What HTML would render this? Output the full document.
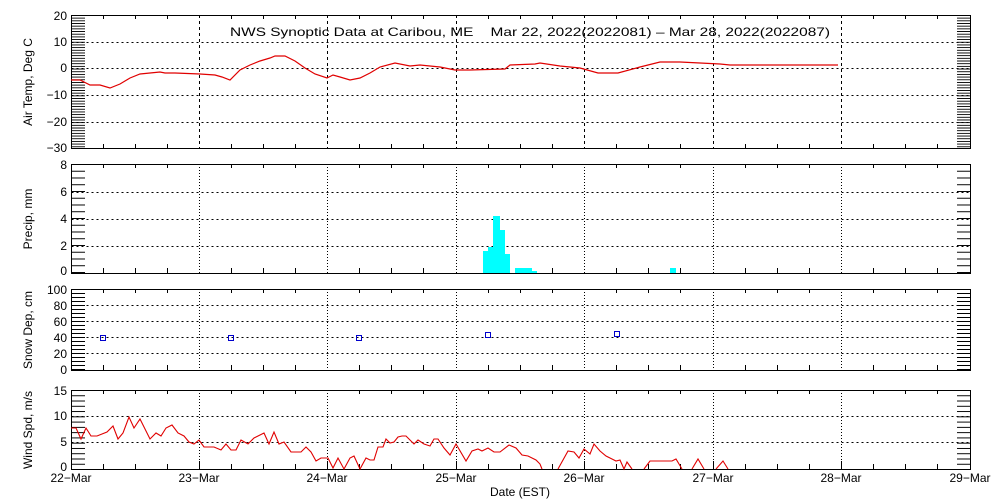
<!DOCTYPE html>
<html><head><meta charset="utf-8"><style>
html,body{margin:0;padding:0;background:#fff}
svg{display:block}
text{font-family:"Liberation Sans",sans-serif;font-size:12px;fill:#000}
</style></head><body>
<svg width="1000" height="500" viewBox="0 0 1000 500" xmlns="http://www.w3.org/2000/svg" shape-rendering="crispEdges">
<defs>
<pattern id="p1" patternUnits="userSpaceOnUse" x="0" y="15" width="20" height="2.68"><rect x="0" y="0" width="20" height="1" fill="#000"/></pattern>
<pattern id="p2" patternUnits="userSpaceOnUse" x="0" y="164" width="20" height="6.75"><rect x="0" y="0" width="20" height="1" fill="#000"/></pattern>
<pattern id="p3" patternUnits="userSpaceOnUse" x="0" y="289" width="20" height="4"><rect x="0" y="0" width="20" height="1" fill="#000"/></pattern>
<pattern id="p4" patternUnits="userSpaceOnUse" x="0" y="390" width="20" height="5.27"><rect x="0" y="0" width="20" height="1" fill="#000"/></pattern>
</defs>
<g fill="none" stroke="#000" stroke-width="1">
<g stroke-dasharray="2,3">
<path d="M71.5 42.5H970M71.5 68.5H970M71.5 95.5H970M71.5 122.5H970"/>
<path d="M71.5 192.5H970M71.5 219.5H970M71.5 246.5H970"/>
<path d="M71.5 305.5H970M71.5 321.5H970M71.5 337.5H970M71.5 353.5H970"/>
<path d="M71.5 416.5H970M71.5 442.5H970"/>
</g>
<g stroke-dasharray="3,3">
<path d="M199.5 15V149M327.5 15V149M456.5 15V149M584.5 15V149M713.5 15V149M841.5 15V149"/>
</g>
<g stroke-dasharray="1,2">
<path d="M199.5 164V273M327.5 164V273M456.5 164V273M584.5 164V273M713.5 164V273M841.5 164V273"/>
<path d="M199.5 289V370M327.5 289V370M456.5 289V370M584.5 289V370M713.5 289V370M841.5 289V370"/>
<path d="M199.5 390V469M327.5 390V469M456.5 390V469M584.5 390V469M713.5 390V469M841.5 390V469"/>
</g>
<rect x="71.5" y="15.5" width="899" height="133"/>
<rect x="71.5" y="164.5" width="899" height="109"/>
<rect x="71.5" y="289.5" width="899" height="81"/>
<rect x="71.5" y="390.5" width="899" height="79"/>
<path d="M103.5 149v-5M135.5 149v-5M167.5 149v-5M231.5 149v-5M263.5 149v-5M295.5 149v-5M359.5 149v-5M391.5 149v-5M423.5 149v-5M488.5 149v-5M520.5 149v-5M552.5 149v-5M616.5 149v-5M648.5 149v-5M680.5 149v-5M745.5 149v-5M777.5 149v-5M809.5 149v-5M873.5 149v-5M905.5 149v-5M937.5 149v-5"/>
<path d="M103.5 15v4M135.5 15v4M167.5 15v4M231.5 15v4M263.5 15v4M295.5 15v4M359.5 15v4M391.5 15v4M423.5 15v4M488.5 15v4M520.5 15v4M552.5 15v4M616.5 15v4M648.5 15v4M680.5 15v4M745.5 15v4M777.5 15v4M809.5 15v4M873.5 15v4M905.5 15v4M937.5 15v4"/>
<path d="M103.5 273v-5M135.5 273v-5M167.5 273v-5M231.5 273v-5M263.5 273v-5M295.5 273v-5M359.5 273v-5M391.5 273v-5M423.5 273v-5M488.5 273v-5M520.5 273v-5M552.5 273v-5M616.5 273v-5M648.5 273v-5M680.5 273v-5M745.5 273v-5M777.5 273v-5M809.5 273v-5M873.5 273v-5M905.5 273v-5M937.5 273v-5"/>
<path d="M103.5 164v4M135.5 164v4M167.5 164v4M231.5 164v4M263.5 164v4M295.5 164v4M359.5 164v4M391.5 164v4M423.5 164v4M488.5 164v4M520.5 164v4M552.5 164v4M616.5 164v4M648.5 164v4M680.5 164v4M745.5 164v4M777.5 164v4M809.5 164v4M873.5 164v4M905.5 164v4M937.5 164v4"/>
<path d="M103.5 370v-5M135.5 370v-5M167.5 370v-5M231.5 370v-5M263.5 370v-5M295.5 370v-5M359.5 370v-5M391.5 370v-5M423.5 370v-5M488.5 370v-5M520.5 370v-5M552.5 370v-5M616.5 370v-5M648.5 370v-5M680.5 370v-5M745.5 370v-5M777.5 370v-5M809.5 370v-5M873.5 370v-5M905.5 370v-5M937.5 370v-5"/>
<path d="M103.5 289v4M135.5 289v4M167.5 289v4M231.5 289v4M263.5 289v4M295.5 289v4M359.5 289v4M391.5 289v4M423.5 289v4M488.5 289v4M520.5 289v4M552.5 289v4M616.5 289v4M648.5 289v4M680.5 289v4M745.5 289v4M777.5 289v4M809.5 289v4M873.5 289v4M905.5 289v4M937.5 289v4"/>
<path d="M103.5 469v-5M135.5 469v-5M167.5 469v-5M231.5 469v-5M263.5 469v-5M295.5 469v-5M359.5 469v-5M391.5 469v-5M423.5 469v-5M488.5 469v-5M520.5 469v-5M552.5 469v-5M616.5 469v-5M648.5 469v-5M680.5 469v-5M745.5 469v-5M777.5 469v-5M809.5 469v-5M873.5 469v-5M905.5 469v-5M937.5 469v-5"/>
<path d="M103.5 390v4M135.5 390v4M167.5 390v4M231.5 390v4M263.5 390v4M295.5 390v4M359.5 390v4M391.5 390v4M423.5 390v4M488.5 390v4M520.5 390v4M552.5 390v4M616.5 390v4M648.5 390v4M680.5 390v4M745.5 390v4M777.5 390v4M809.5 390v4M873.5 390v4M905.5 390v4M937.5 390v4"/>
<path d="M199.5 469v-8M327.5 469v-8M456.5 469v-8M584.5 469v-8M713.5 469v-8M841.5 469v-8"/>
</g>
<rect x="72" y="15" width="13" height="134" fill="url(#p1)"/>
<rect x="957" y="15" width="13" height="134" fill="url(#p1)"/>
<rect x="72" y="164" width="13" height="109" fill="url(#p2)"/>
<rect x="957" y="164" width="13" height="109" fill="url(#p2)"/>
<rect x="72" y="289" width="13" height="81" fill="url(#p3)"/>
<rect x="957" y="289" width="13" height="81" fill="url(#p3)"/>
<rect x="72" y="390" width="13" height="79" fill="url(#p4)"/>
<rect x="957" y="390" width="13" height="79" fill="url(#p4)"/>
<polyline shape-rendering="auto" fill="none" stroke="#e00000" stroke-width="1.2" points="71,80 80,80 90,85 100,85 110,88 120,84 130,78 140,74 150,73 160,72 165,73 175,73 200,74 215,75 222,77 230,80 240,70 250,65 260,61 270,58 275,56 285,56 295,61 305,68 315,74 327,78 333,75 340,77 350,80 360,78 370,73 380,67 395,63 410,66 420,65 440,67 455,70 470,70 505,69 510,65 535,64 540,63 560,66 580,68 598,73 618,73 640,67 660,62 680,62 700,63 720,64 730,65 838,65"/>
<g fill="#00ffff">
<rect x="483" y="251" width="5" height="22"/>
<rect x="488" y="247" width="5" height="26"/>
<rect x="493" y="216" width="7" height="57"/>
<rect x="500" y="230" width="5" height="43"/>
<rect x="505" y="254" width="5" height="19"/>
<rect x="515" y="268" width="17" height="5"/>
<rect x="532" y="271" width="5" height="2"/>
<rect x="670" y="268" width="6" height="5"/>
</g>
<g fill="none" stroke="#0000cc" stroke-width="1">
<rect x="100.5" y="335.5" width="5" height="5"/>
<rect x="228.5" y="335.5" width="5" height="5"/>
<rect x="356.5" y="335.5" width="5" height="5"/>
<rect x="485.5" y="332.5" width="5" height="5"/>
<rect x="614.5" y="331.5" width="5" height="5"/>
</g>
<polyline shape-rendering="auto" fill="none" stroke="#e00000" stroke-width="1.1" points="71,428 76,428 81,439 86,428 91,436 97,436 107,432 113,426 118,439 123,433 129,417 134,428 140,419 150,439 156,433 161,436 166,428 172,425 178,433 184,436 189,442 194,444 199,440 204,447 214,447 221,450 226,444 231,450 236,450 241,440 248,444 254,438 264,433 269,444 274,432 279,444 284,442 291,452 301,452 306,447 311,452 316,461 321,458 328,458 333,468 338,458 344,469 350,458 354,456 360,469 366,458 370,460 374,460 378,447 383,447 386,439 390,443 394,442 398,437 402,436 406,436 414,444 418,440 424,444 430,446 434,439 438,439 444,448 450,455 456,444 466,461 472,451 478,449 482,451 488,448 494,452 500,452 509,445 516,448 522,455 528,456 536,460 540,464 542,469"/>
<polyline shape-rendering="auto" fill="none" stroke="#e00000" stroke-width="1.1" points="558,469 568,451 574,452 579,458 584,449 590,454 594,444 600,451 606,456 612,459 616,461 620,460 624,469 627,462 632,469"/>
<polyline shape-rendering="auto" fill="none" stroke="#e00000" stroke-width="1.1" points="644,469 650,461 672,461 676,459 682,469"/>
<polyline shape-rendering="auto" fill="none" stroke="#e00000" stroke-width="1.1" points="692,469 698,459 704,469"/>
<polyline shape-rendering="auto" fill="none" stroke="#e00000" stroke-width="1.1" points="716,469 723,461 728,469"/>
<text x="230" y="36" font-size="14" textLength="600" lengthAdjust="spacingAndGlyphs" xml:space="preserve">NWS Synoptic Data at Caribou, ME    Mar 22, 2022(2022081) – Mar 28, 2022(2022087)</text>
<g text-anchor="end">
<text x="67" y="20">20</text><text x="67" y="46">10</text><text x="67" y="72">0</text><text x="67" y="99">−10</text><text x="67" y="126">−20</text><text x="67" y="152">−30</text>
<text x="67" y="169">8</text><text x="67" y="196">6</text><text x="67" y="223">4</text><text x="67" y="250">2</text><text x="67" y="275">0</text>
<text x="67" y="294">100</text><text x="67" y="310">80</text><text x="67" y="326">60</text><text x="67" y="342">40</text><text x="67" y="358">20</text><text x="67" y="374">0</text>
<text x="67" y="395">15</text><text x="67" y="420">10</text><text x="67" y="446">5</text><text x="67" y="471">0</text>
</g>
<g text-anchor="middle">
<text x="71" y="482">22−Mar</text><text x="199" y="482">23−Mar</text><text x="327" y="482">24−Mar</text><text x="456" y="482">25−Mar</text><text x="584" y="482">26−Mar</text><text x="713" y="482">27−Mar</text><text x="841" y="482">28−Mar</text><text x="970" y="482">29−Mar</text>
<text x="520" y="496">Date (EST)</text>
</g>
<g text-anchor="middle" font-size="13">
<text font-size="13" transform="translate(32,82) rotate(-90)">Air Temp, Deg C</text>
<text font-size="13" transform="translate(32,219) rotate(-90)">Precip, mm</text>
<text font-size="13" transform="translate(32,330) rotate(-90)">Snow Dep, cm</text>
<text font-size="13" transform="translate(32,430) rotate(-90)">Wind Spd, m/s</text>
</g>
</svg>
</body></html>
